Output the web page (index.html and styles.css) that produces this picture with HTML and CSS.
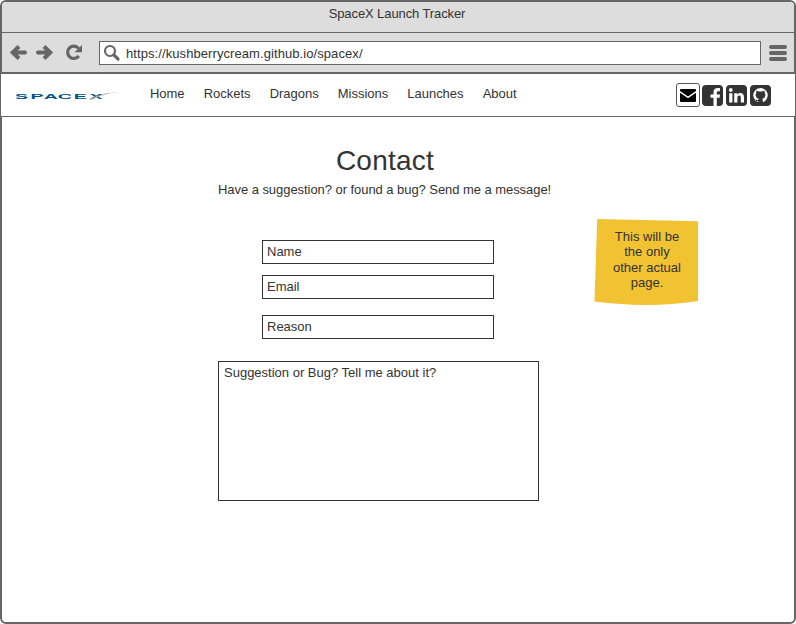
FILE: index.html
```html
<!DOCTYPE html>
<html lang="en">
<head>
<meta charset="utf-8">
<title>SpaceX Launch Tracker</title>
<link rel="stylesheet" href="styles.css">
</head>
<body>
<div class="window">
  <div class="titlebar"><span class="window-title">SpaceX Launch Tracker</span></div>
  <div class="toolbar">
    <svg class="controls" width="76" height="18" viewBox="0 0 76 18">
      <path d="M10 2.500 3.700 8.500l6.300 6M4.500 8.500H16" fill="none" stroke="#666" stroke-width="4"/>
      <circle cx="16" cy="8.500" r="2" fill="#666"/>
      <path d="M35 2.500l6.300 6-6.300 6M40.500 8.500H29" fill="none" stroke="#666" stroke-width="4"/>
      <circle cx="29" cy="8.500" r="2" fill="#666"/>
      <path d="M69.500 4.200A6.200 6.200 0 1 0 69.800 12" fill="none" stroke="#666" stroke-width="3.200"/>
      <path d="M73 1V8.300H65.500z" fill="#666"/>
    </svg>
    <div class="address">
      <svg width="18" height="18" viewBox="0 0 18 18" fill="none" stroke="#666">
        <circle cx="7" cy="7" r="5" stroke-width="2.200"/>
        <path d="M10.800 10.800 15 15" stroke-width="3.200" stroke-linecap="round"/>
      </svg>
      <span class="url">https://kushberrycream.github.io/spacex/</span>
    </div>
    <div class="burger"><i></i><i></i><i></i></div>
  </div>
  <header class="site-header">
    <svg class="logo" width="106" height="12" viewBox="0 0 106 12">
      <text transform="scale(2.800 1)" x="0 5.500 10.300 15.300 21 26.600" y="8">SPACEX</text>
      <path d="M74 8.500C82 4 90 1.700 104 1.200 92 2.300 84 5 78 8.500z" fill="#a4a9ad"/>
    </svg>
    <nav class="nav">
      <a>Home</a><a>Rockets</a><a>Dragons</a><a>Missions</a><a>Launches</a><a>About</a>
    </nav>
    <div class="social">
      <span class="mail"><svg width="16" height="13" viewBox="0 0 16 13"><path d="M1 0h14Q16 0 16 1V2L8 7.500 0 2V1Q0 0 1 0zM0 3.800l8 5.500 8-5.500V12q0 1-1 1H1Q0 13 0 12z"/></svg></span>
      <svg width="21" height="21" viewBox="0 0 21 21"><rect width="21" height="21" rx="4" fill="#333"/><path d="M11.500 21v-8.200H8.500V9.500h3V7.200C11.500 4.300 13.200 3 15.800 3H18v3.200h-1.700c-1.200 0-1.500.5-1.500 1.500v1.800H18l-.4 3.300h-2.800V21z" fill="#fff"/></svg>
      <svg width="21" height="21" viewBox="0 0 21 21"><rect width="21" height="21" rx="4" fill="#333"/><circle cx="4.800" cy="5" r="1.900" fill="#fff"/><path d="M3.200 8.200h3.200v9.400H3.200zM8.200 8.200h3.100v1.300c.7-1 1.700-1.600 3-1.600 2.300 0 3.700 1.500 3.700 4.300v5.400h-3.200v-5c0-1.300-.5-2.100-1.600-2.100-1.200 0-1.800.8-1.800 2.100v5H8.200z" fill="#fff"/></svg>
      <svg width="21" height="21" viewBox="0 0 21 21"><rect width="21" height="21" rx="4" fill="#333"/><circle cx="10.500" cy="10.300" r="7.200" fill="#fff"/><path d="M6.500 5.800q1.200-.1 2.400.8 1.600-.4 3.200 0 1.200-.9 2.400-.8.500 1.200.1 2.200 1 1.100.8 2.600-.4 2.700-3.200 3.100.6.600.6 1.500v3H8.200V16c-2 .4-2.500-.6-3-1.500.9-.3 1.500.8 3 .4q0-.8.600-1.200-2.800-.4-3.200-3.100-.2-1.500.8-2.600Q6 7 6.500 5.800z" fill="#333"/></svg>
    </div>
  </header>
  <main class="page">
    <section class="contact">
      <h1>Contact</h1>
      <p class="lead">Have a suggestion? or found a bug? Send me a message!</p>
      <div class="fields">
        <div class="field">Name</div>
        <div class="field">Email</div>
        <div class="field reason">Reason</div>
      </div>
      <div class="message">Suggestion or Bug? Tell me about it?</div>
    </section>
    <aside class="note">
      <svg class="paper" width="104" height="87" viewBox="0 0 104 87"><path d="M2.200 0 103 2.300V82Q54 89.500-.5 82.500z" fill="#f1c232"/></svg>
      <p>This will be<br>the only<br>other actual<br>page.</p>
    </aside>
  </main>
</div>
</body>
</html>
```

FILE: styles.css
```css
* { box-sizing: border-box; }

body {
  margin: 0;
  background: #fff;
  color: #333;
  font: 13px/16px "Liberation Sans", Arial, sans-serif;
}

h1, p { margin: 0; font-weight: normal; }

svg { display: block; flex: none; overflow: visible; }

.window {
  height: 624px;
  border: 2px solid #666;
  border-radius: 6px;
}

.titlebar {
  height: 31px;
  padding: 4px 2px 0 0;
  border-bottom: 1px solid #666;
  border-radius: 4px 4px 0 0;
  background: #ddd;
  text-align: center;
}

.window-title { letter-spacing: -0.1px; }

.toolbar {
  display: flex;
  align-items: center;
  height: 41px;
  padding: 0 7px 0 7px;
  border-bottom: 2px solid #666;
  background: #ddd;
}

.address {
  display: flex;
  align-items: center;
  flex: 1;
  height: 24px;
  margin: 0 8px 0 14px;
  padding-left: 3px;
  border: 1px solid #666;
  background: #fff;
}

.url { margin-left: 5px; padding-top: 2px; letter-spacing: 0.08px; }

.burger { display: grid; gap: 2px; width: 18px; }
.burger i { height: 4px; border-radius: 2px; background: #666; }

.site-header {
  display: flex;
  height: 43px;
  margin: 0 -1px;
  border-bottom: 1px solid #666;
  background: #fff;
}

.logo { margin: 17px 0 0 14px; }
.logo text { font: bold 7px "Liberation Sans", sans-serif; fill: #005288; }

.nav { display: flex; gap: 19.200px; margin: 12px 0 0 29px; letter-spacing: -0.03px; }

.social { display: flex; gap: 3px; margin: 11px 24px 0 auto; }

.mail {
  display: grid;
  place-items: center;
  width: 24px;
  height: 24px;
  margin: -2px -1px 0 0;
  border: 1px solid #555;
  border-radius: 3px;
}

.page { display: flex; padding-left: 216px; }

.contact { width: 334px; }

h1 {
  margin-top: 27px;
  font-size: 28px;
  line-height: 34px;
  letter-spacing: 0.25px;
  text-align: center;
}

.lead { margin-top: 4px; white-space: nowrap; letter-spacing: -0.055px; }

.fields { width: 232px; margin: 42px 0 0 44px; }

.field {
  height: 24px;
  margin-bottom: 11px;
  padding: 3px 4px;
  border: 1px solid #333;
}

.field.reason { margin: 16px 0 22px; }

.message {
  width: 321px;
  height: 140px;
  padding: 3px 5px;
  border: 1px solid #333;
}

.note {
  display: grid;
  width: 104px;
  height: 87px;
  margin: 102px 0 0 43px;
}

.note > * { grid-area: 1 / 1; }

.note p {
  padding-top: 10px;
  line-height: 15.400px;
  text-align: center;
}
```
